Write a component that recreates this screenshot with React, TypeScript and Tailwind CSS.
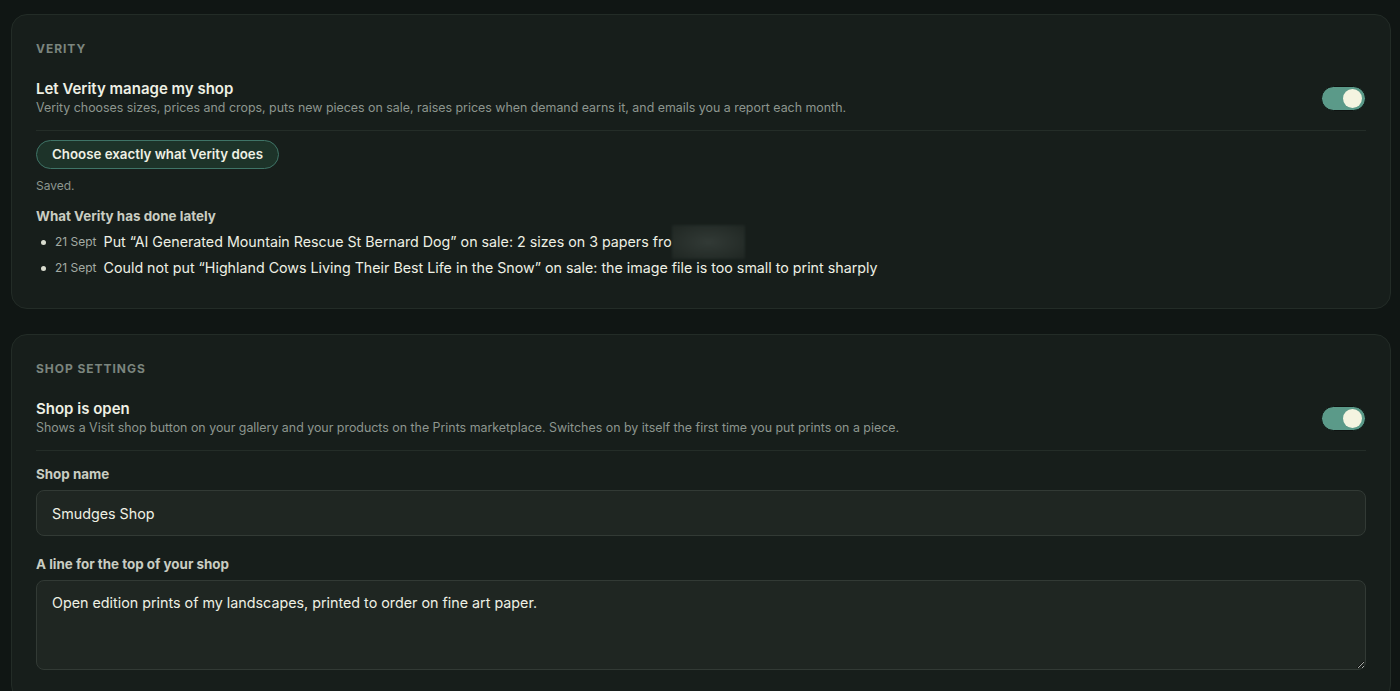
import React from 'react';

const activity = [
  {
    date: '21 Sept',
    text: 'Put “AI Generated Mountain Rescue St Bernard Dog” on sale: 2 sizes on 3 papers fro',
    redacted: true,
  },
  {
    date: '21 Sept',
    text: 'Could not put “Highland Cows Living Their Best Life in the Snow” on sale: the image file is too small to print sharply',
    redacted: false,
  },
];

const Toggle: React.FC<{ on: boolean }> = ({ on }) => (
  <button
    type="button"
    className={`relative flex h-[25px] w-[45px] shrink-0 items-center rounded-full border border-[#0e1311] ${
      on ? 'bg-[#5b9a89]' : 'bg-[#2f3833]'
    }`}
  >
    <span
      className={`absolute top-[2px] h-[19px] w-[19px] rounded-full bg-[#f4f4e0] ${on ? 'right-[3px]' : 'left-[3px]'}`}
    />
  </button>
);

const SettingRow: React.FC<{ title: string; description: string; on: boolean }> = ({ title, description, on }) => (
  <div className="flex items-center justify-between border-b border-[#242d28] pb-[13px]">
    <div>
      <div className="text-[15px] leading-[20px] font-semibold text-[#eef0e4]">{title}</div>
      <div className="text-[12.4px] leading-[18px] text-[#8d968f]">{description}</div>
    </div>
    <Toggle on={on} />
  </div>
);

const Card: React.FC<{ label: string; children: React.ReactNode }> = ({ label, children }) => (
  <section className="rounded-[16px] border border-[#232c27] bg-[#171e1b] px-6 pt-[26px] pb-[30px]">
    <h2 className="mb-[22px] text-[12px] leading-[16px] font-bold tracking-[0.08em] text-[#7b857e] uppercase">
      {label}
    </h2>
    {children}
  </section>
);

export default function App() {
  return (
    <div
      className="min-h-screen bg-[#101614] pt-[14px] pr-[9px] pl-[11px] pb-6 text-[#eef0e4]"
      style={{ fontFamily: 'Inter, "Noto Sans", sans-serif' }}
    >
      <div className="flex flex-col gap-[25px]">
        {/* Verity */}
        <Card label="Verity">
          <SettingRow
            title="Let Verity manage my shop"
            description="Verity chooses sizes, prices and crops, puts new pieces on sale, raises prices when demand earns it, and emails you a report each month."
            on
          />
          <button
            type="button"
            className="mt-[9px] h-[29px] rounded-full border border-[#3f7467] bg-[#1d3329] px-[15px] text-[13.3px] font-semibold text-[#eef0e4]"
          >
            Choose exactly what Verity does
          </button>
          <div className="mt-[9px] text-[12px] leading-[16px] text-[#8d968f]">Saved.</div>
          <div className="mt-[13px] text-[13.4px] leading-[18px] font-bold text-[#c9cdc2]">What Verity has done lately</div>
          <ul className="mt-[7px] flex flex-col gap-[6px] pl-[5px]">
            {activity.map((item, i) => (
              <li key={i} className="flex items-center text-[14.25px] leading-[20px]">
                <span className="mr-[9px] h-[5px] w-[5px] rounded-full bg-[#d9dccf]" />
                <span className="mr-[7px] text-[12px] text-[#a3aba4]">{item.date}</span>
                <span className="text-[#eef0e4]">{item.text}</span>
                {item.redacted && (
                  <span className="relative inline-block h-[20px] w-[73px]">
                    <span className="absolute top-[-7px] left-0 h-[34px] w-[73px] bg-[radial-gradient(ellipse_at_center,#323a36,#1f2622)] blur-[1px]" />
                  </span>
                )}
              </li>
            ))}
          </ul>
        </Card>

        {/* Shop settings */}
        <Card label="Shop settings">
          <SettingRow
            title="Shop is open"
            description="Shows a Visit shop button on your gallery and your products on the Prints marketplace. Switches on by itself the first time you put prints on a piece."
            on
          />
          <label className="mt-[14px] block text-[13.4px] leading-[18px] font-bold text-[#c9cdc2]">Shop name</label>
          <input
            defaultValue="Smudges Shop"
            className="mt-[7px] block h-[46px] w-full rounded-[8px] border border-[#323a35] bg-[#1f2622] px-[15px] text-[14.3px] text-[#eef0e4] outline-none"
          />
          <label className="mt-[19px] block text-[13.4px] leading-[18px] font-bold text-[#c9cdc2]">
            A line for the top of your shop
          </label>
          <textarea
            defaultValue="Open edition prints of my landscapes, printed to order on fine art paper."
            className="mt-[7px] block h-[90px] w-full rounded-[8px] border border-[#323a35] bg-[#1f2622] px-[15px] py-[11px] text-[14.3px] leading-[22px] text-[#eef0e4] outline-none"
          />
        </Card>
      </div>
    </div>
  );
}
